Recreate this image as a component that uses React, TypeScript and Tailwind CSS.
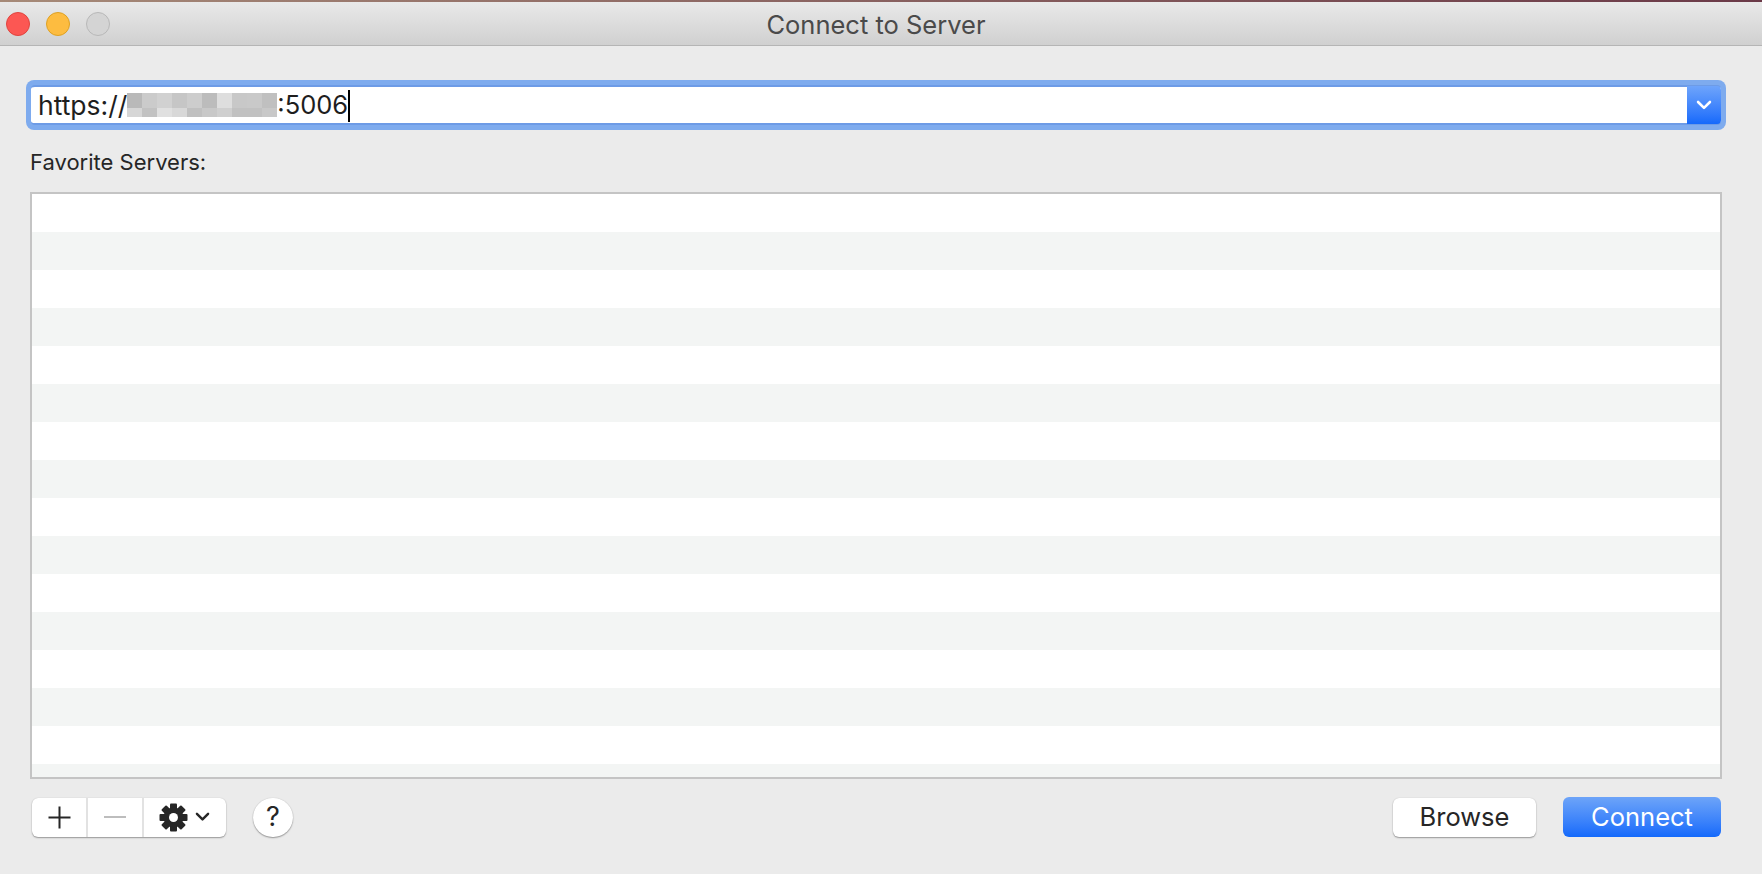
const font = "font-['Inter','Liberation_Sans',sans-serif]";

const blurTop = [
  "bg-[#b9b9b9]", "bg-[#cbcbcb]", "bg-[#d1d1d1]", "bg-[#c6c6c6]", "bg-[#cdcdcd]",
  "bg-[#bcbcbc]", "bg-[#dedede]", "bg-[#c8c8c8]", "bg-[#c9c9c9]", "bg-[#c0c0c0]",
];
const blurBottom = [
  "bg-[#d6d6d6]", "bg-[#c2c2c2]", "bg-[#e0e0e0]", "bg-[#d8d8d8]", "bg-[#c0c0c0]",
  "bg-[#c8c8c8]", "bg-[#cfcfcf]", "bg-[#c1c1c1]", "bg-[#c1c1c1]", "bg-[#c8c8c8]",
];

function GearIcon() {
  const teeth = [0, 45, 90, 135, 180, 225, 270, 315];
  return (
    <svg width="29" height="29" viewBox="0 0 29 29">
      {teeth.map((deg) => (
        <rect key={deg} x="11" y="0.5" width="7" height="7" rx="1" fill="#262626" transform={`rotate(${deg} 14.5 14.5)`} />
      ))}
      <circle cx="14.5" cy="14.5" r="10" fill="#262626" />
      <circle cx="14.5" cy="14.5" r="4.5" fill="#ffffff" />
    </svg>
  );
}

function Chevron({ color, size }: { color: string; size: number }) {
  return (
    <svg width={size} height={size * 0.62} viewBox="0 0 16 10" fill="none">
      <path d="M2 2l6 6 6-6" stroke={color} strokeWidth="2.6" strokeLinecap="round" strokeLinejoin="round" />
    </svg>
  );
}

export default function App() {
  const rows = Array.from({ length: 16 }, (_, i) => i);

  return (
    <div className={`${font} w-[1762px] h-[874px] overflow-hidden bg-[#ebebeb] flex flex-col`}>
      <div className="h-[2px] bg-gradient-to-r from-[#a68a78] to-[#6b3a48]" />
      <div className="h-[44px] flex items-center border-b border-[#b5b5b5] bg-gradient-to-b from-[#e9e9e9] to-[#d0d0d0]">
        <div className="w-[110px] flex items-center gap-[16px] pl-[6px] pt-[1px]">
          <div className="w-[24px] h-[24px] rounded-full bg-[#fc5753] border border-[#e0443e]" />
          <div className="w-[24px] h-[24px] rounded-full bg-[#fdbc40] border border-[#dea123]" />
          <div className="w-[24px] h-[24px] rounded-full bg-[#d4d4d4] border border-[#b8b8b8]" />
        </div>
        <div className="flex-1 pr-[120px] pt-[3px] text-center text-[25.5px] text-[#4a4a4a]">Connect to Server</div>
      </div>

      <div className="flex-1 flex flex-col pl-[26px] pr-[36px]">
        <div className="mt-[34px] h-[50px] p-[5px] rounded-[8px] bg-[#7eabee]">
          <div className="h-full flex rounded-[4px] bg-white border-y-2 border-[#6d9be6]">
            <div className="flex-1 flex items-center pl-[7px] pt-[1px] text-[26.5px] text-[#1e1e1e]">
              <span>https://</span>
              <span className="flex flex-col w-[150px] -mt-[1px]">
                <span className="flex">
                  {blurTop.map((c, i) => (
                    <span key={i} className={`w-[15px] h-[15px] ${c}`} />
                  ))}
                </span>
                <span className="flex">
                  {blurBottom.map((c, i) => (
                    <span key={i} className={`w-[15px] h-[9px] ${c}`} />
                  ))}
                </span>
              </span>
              <span className="text-[25.5px]">:5006</span>
              <span className="w-[2px] h-[32px] bg-black" />
            </div>
            <div className="w-[34px] -my-[1px] flex items-center justify-center rounded-r-[4px] bg-gradient-to-b from-[#6ea4fb] to-[#1469fb]">
              <Chevron color="#ffffff" size={16} />
            </div>
          </div>
        </div>

        <div className="mt-[21px] ml-[4px] h-[22px] leading-[22px] text-[22px] text-[#262626]">Favorite Servers:</div>

        <div className="mt-[19px] ml-[4px] mr-[4px] h-[587px] overflow-hidden border-2 border-[#c4c4c4] bg-white">
          {rows.map((i) => (
            <div key={i} className={i % 2 === 0 ? "h-[38px] bg-white" : "h-[38px] bg-[#f3f5f4]"} />
          ))}
        </div>

        <div className="mt-[18px] ml-[6px] flex items-center">
          <div className="w-[194px] h-[39px] flex rounded-[6px] bg-white shadow-[0_1px_1.5px_rgba(0,0,0,0.35),0_0_1px_rgba(0,0,0,0.2)]">
            <div className="w-[56px] flex items-center justify-center border-r-2 border-[#e2e2e2]">
              <svg width="23" height="23" viewBox="0 0 23 23">
                <path d="M11.5 0.5v22M0.5 11.5h22" stroke="#262626" strokeWidth="2" />
              </svg>
            </div>
            <div className="w-[56px] flex items-center justify-center border-r-2 border-[#e2e2e2]">
              <div className="w-[22px] h-[2px] bg-[#bdbdbd]" />
            </div>
            <div className="flex-1 flex items-center justify-center gap-[7px] pr-[1px]">
              <GearIcon />
              <Chevron color="#262626" size={15} />
            </div>
          </div>
          <div className="ml-[27px] w-[40px] h-[39px] flex items-center justify-center rounded-full bg-white text-[27px] text-[#262626] shadow-[0_1px_1.5px_rgba(0,0,0,0.35),0_0_1px_rgba(0,0,0,0.2)]">
            ?
          </div>
          <div className="ml-auto w-[143px] h-[39px] flex items-center justify-center rounded-[6px] bg-white text-[25.5px] text-[#262626] shadow-[0_1px_1.5px_rgba(0,0,0,0.35),0_0_1px_rgba(0,0,0,0.2)]">
            Browse
          </div>
          <div className="ml-[27px] w-[158px] h-[40px] flex items-center justify-center rounded-[6px] bg-gradient-to-b from-[#6da4f8] to-[#1269fb] text-[25.5px] text-white">
            Connect
          </div>
          <div className="w-[5px]" />
        </div>
      </div>
    </div>
  );
}
